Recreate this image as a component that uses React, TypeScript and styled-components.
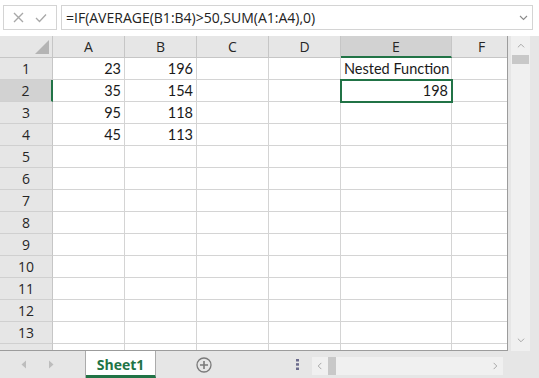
import * as React from 'react';
import styled, { createGlobalStyle } from 'styled-components';

const GREEN = '#217346';

const Global = createGlobalStyle`
  html, body { margin: 0; padding: 0; background: #ffffff; }
  * { box-sizing: border-box; }
`;

const Window = styled.div`
  width: 539px;
  height: 378px;
  display: flex;
  flex-direction: column;
  overflow: hidden;
  background: #ffffff;
  font-family: "Open Sans", "Noto Sans", sans-serif;
`;

const FormulaBar = styled.div`
  height: 36px;
  display: flex;
  flex-direction: row;
  gap: 4px;
  padding: 5px 6px 6px 3px;
`;

const ActionBox = styled.div`
  width: 54px;
  border: 1px solid #d4d4d4;
  display: flex;
  align-items: center;
  justify-content: space-around;
  padding: 0 4px;
  color: #a8a8a8;
`;

const FormulaInput = styled.div`
  flex: 1;
  border: 1px solid #d4d4d4;
  display: flex;
  align-items: center;
  justify-content: space-between;
  padding: 0 4px 0 4px;
  font-size: 14px;
  color: #222222;
`;

const Main = styled.div`
  height: 315px;
  display: flex;
  flex-direction: row;
  background: #e6e6e6;
`;

const GridWrap = styled.div`
  width: 508px;
  height: 315px;
  overflow: hidden;
  background: #ffffff;
  border-right: 1px solid #9c9c9c;
  border-bottom: 1px solid #9c9c9c;
`;

const Grid = styled.div`
  display: grid;
  grid-template-columns: 53px 72px 72px 72px 72px 111px 60px;
  grid-auto-rows: 22px;
`;

const Corner = styled.div`
  background: #e6e6e6;
  border-right: 1px solid #c6c6c6;
  border-bottom: 1px solid #c6c6c6;
  display: flex;
  align-items: flex-end;
  justify-content: flex-end;
  padding: 0 3px 3px 0;
`;

const ColHead = styled.div<{ $active?: boolean }>`
  background: ${p => (p.$active ? '#d2d2d2' : '#e6e6e6')};
  border-right: 1px solid #c6c6c6;
  border-bottom: ${p => (p.$active ? `2px solid ${GREEN}` : '1px solid #c6c6c6')};
  display: flex;
  align-items: center;
  justify-content: center;
  font-size: 14px;
  color: #262626;
`;

const RowHead = styled.div<{ $active?: boolean }>`
  background: ${p => (p.$active ? '#d2d2d2' : '#e6e6e6')};
  border-right: ${p => (p.$active ? `2px solid ${GREEN}` : '1px solid #c6c6c6')};
  border-bottom: 1px solid #d0d0d0;
  display: flex;
  align-items: center;
  justify-content: center;
  font-size: 14px;
  color: #262626;
`;

const Cell = styled.div<{ $selected?: boolean; $align?: 'left' | 'right' }>`
  border-right: 1px solid #d4d4d4;
  border-bottom: 1px solid #d4d4d4;
  display: flex;
  align-items: center;
  justify-content: ${p => (p.$align === 'left' ? 'flex-start' : 'flex-end')};
  padding: 0 3px 0 3px;
  font-family: Lato, "Open Sans", sans-serif;
  font-size: 14.5px;
  color: #1a1a1a;
  white-space: nowrap;
  position: relative;
  ${p => p.$selected && `outline: 2px solid ${GREEN}; outline-offset: -1px; z-index: 1;`}
`;

const VScroll = styled.div`
  width: 30px;
  display: flex;
  flex-direction: column;
  padding: 0 0 0 3px;
`;

const VTrack = styled.div`
  width: 19px;
  height: 100%;
  background: #f0f0f0;
  display: flex;
  flex-direction: column;
  align-items: stretch;
`;

const ArrowBtn = styled.div<{ $h?: number }>`
  height: ${p => p.$h ?? 20}px;
  display: flex;
  align-items: center;
  justify-content: center;
  color: #a6a6a6;
`;

const VThumb = styled.div`
  height: 9px;
  margin: 0 1px;
  background: #c8c8c8;
`;

const Spacer = styled.div`
  flex: 1;
`;

const BottomBar = styled.div`
  height: 27px;
  display: flex;
  flex-direction: row;
  align-items: stretch;
  background: #e6e6e6;
`;

const NavArrows = styled.div`
  width: 86px;
  display: flex;
  align-items: center;
  justify-content: space-around;
  padding: 0 20px 0 10px;
  border-right: 1px solid #ababab;
`;

const Tab = styled.div`
  width: 70px;
  background: #ffffff;
  border-right: 1px solid #ababab;
  border-bottom: 3px solid ${GREEN};
  display: flex;
  align-items: center;
  justify-content: center;
  font-family: "Open Sans", sans-serif;
  font-weight: 700;
  font-size: 14px;
  color: ${GREEN};
  padding-top: 2px;
`;

const AddSheet = styled.div`
  width: 96px;
  display: flex;
  align-items: center;
  justify-content: center;
`;

const Dots = styled.div`
  width: 60px;
  display: flex;
  align-items: center;
  justify-content: center;
  padding-left: 30px;
`;

const HScroll = styled.div`
  width: 191px;
  margin: 6px 0 3px 0;
  background: #f0f0f0;
  display: flex;
  align-items: center;
  padding: 0 4px;
  gap: 4px;
  color: #a6a6a6;
`;

const HThumb = styled.div`
  width: 8px;
  height: 100%;
  background: #c8c8c8;
`;

const cols = ['A', 'B', 'C', 'D', 'E', 'F'];

const data: Record<string, string> = {
  A1: '23', B1: '196', E1: 'Nested Function',
  A2: '35', B2: '154', E2: '198',
  A3: '95', B3: '118',
  A4: '45', B4: '113',
};

const Chevron = ({ dir, size = 8 }: { dir: 'up' | 'down' | 'left' | 'right'; size?: number }) => {
  const pts = {
    up: '1,6 4.5,2.5 8,6',
    down: '1,3 4.5,6.5 8,3',
    left: '6,1 2.5,4.5 6,8',
    right: '3,1 6.5,4.5 3,8',
  }[dir];
  return (
    <svg width={size} height={size} viewBox="0 0 9 9">
      <polyline points={pts} fill="none" stroke="currentColor" strokeWidth="1.1" />
    </svg>
  );
};

const Tri = ({ dir }: { dir: 'left' | 'right' }) => (
  <svg width="6" height="9" viewBox="0 0 6 9">
    <polygon points={dir === 'left' ? '5,0.5 5,8.5 0.5,4.5' : '1,0.5 1,8.5 5.5,4.5'} fill="#bdbdbd" />
  </svg>
);

function App() {
  const rows = Array.from({ length: 14 }, (_, i) => i + 1);
  return (
    <Window>
      <Global />
      <FormulaBar>
        <ActionBox>
          <svg width="11" height="11" viewBox="0 0 11 11">
            <path d="M1 1 L10 10 M10 1 L1 10" stroke="#a8a8a8" strokeWidth="1.4" />
          </svg>
          <svg width="12" height="10" viewBox="0 0 12 10">
            <path d="M1 5 L4.5 8.5 L11 1.5" fill="none" stroke="#a8a8a8" strokeWidth="1.3" />
          </svg>
        </ActionBox>
        <FormulaInput>
          <span>=IF(AVERAGE(B1:B4)&gt;50,SUM(A1:A4),0)</span>
          <span style={{ color: '#8a8a8a', display: 'flex' }}><Chevron dir="down" size={9} /></span>
        </FormulaInput>
      </FormulaBar>
      <Main>
        <GridWrap>
          <Grid>
            <Corner>
              <svg width="14" height="14" viewBox="0 0 14 14">
                <polygon points="14,0 14,14 0,14" fill="#b4b4b4" />
              </svg>
            </Corner>
            {cols.map(c => (
              <ColHead key={c} $active={c === 'E'}>{c}</ColHead>
            ))}
            {rows.map(r => (
              <React.Fragment key={r}>
                <RowHead $active={r === 2}>{r}</RowHead>
                {cols.map(c => {
                  const v = data[`${c}${r}`] ?? '';
                  const isText = v !== '' && isNaN(Number(v));
                  return (
                    <Cell key={c} $selected={c === 'E' && r === 2} $align={isText ? 'left' : 'right'}>
                      {v}
                    </Cell>
                  );
                })}
              </React.Fragment>
            ))}
          </Grid>
        </GridWrap>
        <VScroll>
          <VTrack>
            <ArrowBtn $h={19}><Chevron dir="up" /></ArrowBtn>
            <VThumb />
            <Spacer />
            <ArrowBtn $h={22}><Chevron dir="down" /></ArrowBtn>
          </VTrack>
        </VScroll>
      </Main>
      <BottomBar>
        <NavArrows>
          <Tri dir="left" />
          <Tri dir="right" />
        </NavArrows>
        <Tab>Sheet1</Tab>
        <AddSheet>
          <svg width="16" height="16" viewBox="0 0 16 16">
            <circle cx="8" cy="8" r="7" fill="none" stroke="#7a7a7a" strokeWidth="1.3" />
            <path d="M8 4 V12 M4 8 H12" stroke="#7a7a7a" strokeWidth="1.6" />
          </svg>
        </AddSheet>
        <Dots>
          <svg width="3" height="11" viewBox="0 0 3 11">
            <rect x="0" y="0" width="3" height="2.5" fill="#6b6b8c" />
            <rect x="0" y="4.2" width="3" height="2.5" fill="#6b6b8c" />
            <rect x="0" y="8.5" width="3" height="2.5" fill="#6b6b8c" />
          </svg>
        </Dots>
        <HScroll>
          <Chevron dir="left" />
          <HThumb />
          <Spacer />
          <Chevron dir="right" />
        </HScroll>
      </BottomBar>
    </Window>
  );
}

export default App;
